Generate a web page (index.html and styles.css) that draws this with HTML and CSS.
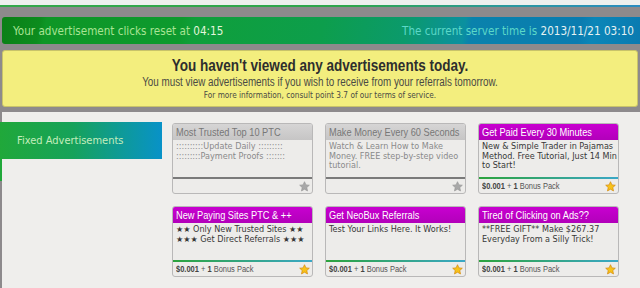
FILE: index.html
```html
<!DOCTYPE html>
<html lang="en">
<head>
  <meta charset="UTF-8" />
  <title>View Advertisements</title>
  <link rel="stylesheet" href="styles.css">
</head>
<body>
  <div class="top-strip"></div>
  <div class="top-line"></div>

  <div class="page">
    <!-- Reset / server time banner -->
    <div class="clock-bar">
      <div class="reset">Your advertisement clicks reset at <b>04:15</b></div>
      <div class="server">The current server time is <b>2013/11/21 03:10</b></div>
    </div>

    <!-- Warning -->
    <div class="notice">
      <h1>You haven't viewed any advertisements today.</h1>
      <p class="notice-sub">You must view advertisements if you wish to receive from your referrals tomorrow.</p>
      <p class="notice-small">For more information, consult point 3.7 of our terms of service.</p>
    </div>

    <!-- Ads -->
    <div class="ads">
      <div class="ads-side">
        <div class="ads-tab">Fixed Advertisements</div>
      </div>

      <div class="ads-grid">
        <div class="ad off">
          <div class="ad-head"><span>Most Trusted Top 10 PTC</span></div>
          <div class="ad-body">::::::::::Update Daily :::::::::<br>:::::::::Payment Proofs :::::::</div>
          <div class="ad-foot"><span></span>
            <svg class="star" viewBox="0 0 24 24"><path d="M12 1.5l3.2 7 7.3.7-5.5 5 1.6 7.5L12 17.9l-6.6 3.8 1.6-7.5-5.5-5 7.3-.7z"/></svg>
          </div>
        </div>

        <div class="ad off">
          <div class="ad-head"><span>Make Money Every 60 Seconds</span></div>
          <div class="ad-body">Watch &amp; Learn How to Make Money. FREE step-by-step video tutorial.</div>
          <div class="ad-foot"><span></span>
            <svg class="star" viewBox="0 0 24 24"><path d="M12 1.5l3.2 7 7.3.7-5.5 5 1.6 7.5L12 17.9l-6.6 3.8 1.6-7.5-5.5-5 7.3-.7z"/></svg>
          </div>
        </div>

        <div class="ad">
          <div class="ad-head"><span>Get Paid Every 30 Minutes</span></div>
          <div class="ad-body">New &amp; Simple Trader in Pajamas Method. Free Tutorial, Just 14 Min to Start!</div>
          <div class="ad-foot"><span><b>$0.001</b> + <b>1</b> Bonus Pack</span>
            <svg class="star" viewBox="0 0 24 24"><path d="M12 1.5l3.2 7 7.3.7-5.5 5 1.6 7.5L12 17.9l-6.6 3.8 1.6-7.5-5.5-5 7.3-.7z"/></svg>
          </div>
        </div>

        <div class="ad">
          <div class="ad-head"><span>New Paying Sites PTC &amp; ++</span></div>
          <div class="ad-body">&#9733;&#9733; Only New Trusted Sites &#9733;&#9733;<br>&#9733;&#9733;&#9733; Get Direct Referrals &#9733;&#9733;&#9733;</div>
          <div class="ad-foot"><span><b>$0.001</b> + <b>1</b> Bonus Pack</span>
            <svg class="star" viewBox="0 0 24 24"><path d="M12 1.5l3.2 7 7.3.7-5.5 5 1.6 7.5L12 17.9l-6.6 3.8 1.6-7.5-5.5-5 7.3-.7z"/></svg>
          </div>
        </div>

        <div class="ad">
          <div class="ad-head"><span>Get NeoBux Referrals</span></div>
          <div class="ad-body">Test Your Links Here. It Works!</div>
          <div class="ad-foot"><span><b>$0.001</b> + <b>1</b> Bonus Pack</span>
            <svg class="star" viewBox="0 0 24 24"><path d="M12 1.5l3.2 7 7.3.7-5.5 5 1.6 7.5L12 17.9l-6.6 3.8 1.6-7.5-5.5-5 7.3-.7z"/></svg>
          </div>
        </div>

        <div class="ad">
          <div class="ad-head"><span>Tired of Clicking on Ads??</span></div>
          <div class="ad-body">**FREE GIFT** Make $267.37 Everyday From a Silly Trick!</div>
          <div class="ad-foot"><span><b>$0.001</b> + <b>1</b> Bonus Pack</span>
            <svg class="star" viewBox="0 0 24 24"><path d="M12 1.5l3.2 7 7.3.7-5.5 5 1.6 7.5L12 17.9l-6.6 3.8 1.6-7.5-5.5-5 7.3-.7z"/></svg>
          </div>
        </div>
      </div>
    </div>
  </div>
</body>
</html>
```

FILE: styles.css
```css
/* BASE */
* { margin: 0; padding: 0; box-sizing: border-box; }
html, body { height: 100%; overflow: hidden; }
body {
  background: #8d8a8c;
  font-family: "DejaVu Sans", Verdana, sans-serif;
  color: #333;
}

/* TOP */
.top-strip { height: 5px; background: #eef0ee; }
.top-line {
  height: 2px;
  background: linear-gradient(90deg, #33a84a 0%, #2ea64c 55%, #2a98a0 80%, #2a8cc0 100%);
}
.page { padding: 10px 0 0 2px; }

/* CLOCK BAR */
.clock-bar {
  height: 27px;
  width: 640px;
  border-radius: 3px 0 0 3px;
  display: flex; align-items: center; justify-content: space-between;
  padding: 0 8px 0 11px;
  font-family: "DejaVu Sans Condensed", "DejaVu Sans", sans-serif;
  font-size: 11.6px;
  background: linear-gradient(100deg, #0a7f16 0%, #0c8c1e 6%, #0e9626 7%, #0d9a2e 28%, #0f9f3a 30%, #0d9e4c 50%, #0b9a6c 63%, #0b90a0 72%, #0a82ac 73%, #0a7cb0 90%, #0b86b8 92%, #0a7ab0 100%);
}
.reset { color: #a8e494; }
.reset b { color: #e4f6dc; font-weight: normal; }
.server { color: #5cd8c8; }
.server b { color: #e6f2f2; font-weight: normal; }

/* NOTICE */
.notice {
  margin-top: 6px;
  width: 636px;
  height: 57px;
  background: #f3ee7e;
  border: 1px solid #c8c36a;
  border-radius: 3px;
  text-align: center;
  padding-top: 6px;
  font-family: "Liberation Sans", Arial, sans-serif;
}
.notice h1 {
  font-size: 16px; line-height: 18px;
  color: #2e2e2e; font-weight: bold;
  transform: scaleX(0.845);
}
.notice-sub {
  font-size: 12px; line-height: 14px; color: #4a4a44;
  transform: scaleX(0.82);
}
.notice-small {
  font-family: "DejaVu Sans Condensed", sans-serif;
  font-size: 8.2px; line-height: 12px; color: #4a4a44;
}

/* ADS */
.ads {
  margin-top: 5px;
  height: 177px;
  background: #efeeec;
  display: flex;
  padding-top: 10px;
}
.ads-side { width: 172px; margin-left: -2px; }
.ads-tab {
  width: 162px; height: 37px;
  background: linear-gradient(90deg, #20a83a 0%, #16a25a 45%, #0e9a98 75%, #0892c8 100%);
  color: #c4eebc;
  font-family: "DejaVu Sans Condensed", "DejaVu Sans", sans-serif;
  font-size: 11px;
  padding: 12px 0 0 17px;
  position: relative;
}
.ads-tab::after {
  content: ""; position: absolute;
  left: 0; top: 37px; width: 2px; height: 22px;
  background: #20a83a;
}

.ads-grid {
  display: grid;
  grid-template-columns: 141px 141px 141px;
  column-gap: 12px; row-gap: 12px;
  grid-auto-rows: 71px;
  margin-top: 1px;
}
.ad {
  background: #edecea;
  border: 1px solid #b9b8b8;
  border-radius: 3px;
  display: flex; flex-direction: column;
  overflow: hidden;
}
.ad-head {
  height: 16px;
  background: linear-gradient(#c800d0, #b200ba);
  color: #fff;
  font-family: "Liberation Sans", Arial, sans-serif;
  font-size: 10.5px; line-height: 16px;
  padding-left: 3px;
  white-space: nowrap;
}
.ad-head span {
  display: inline-block;
  transform: scaleX(0.88); transform-origin: left center;
}
.ad-body {
  flex: 1;
  font-size: 8.1px; line-height: 9.7px;
  color: #383838;
  padding: 2px 1px 0 3px;
  border-bottom: 2px solid;
  border-image: linear-gradient(90deg, #2ca33c, #3ba8c8) 1;
}
.ad-foot {
  height: 14px;
  display: flex; align-items: center; justify-content: space-between;
  padding: 0 2px 0 3px;
  font-family: "Liberation Sans", Arial, sans-serif;
  font-size: 8.5px; color: #555;
}
.ad-foot span {
  display: inline-block;
  transform: scaleX(0.88); transform-origin: left center;
}
.ad-foot b { color: #444; }
.star { width: 11px; height: 11px; fill: #f7c21a; stroke: #d4880a; stroke-width: 1.5; }

.ad.off .ad-head {
  background: linear-gradient(#d6d5d5, #c6c5c5);
  color: #777;
}
.ad.off .ad-body {
  color: #8a8a8a;
  border-image: linear-gradient(#7a7a7a, #7a7a7a) 1;
}
.ad.off .star { fill: #a8a8a8; stroke: #999; }
```
